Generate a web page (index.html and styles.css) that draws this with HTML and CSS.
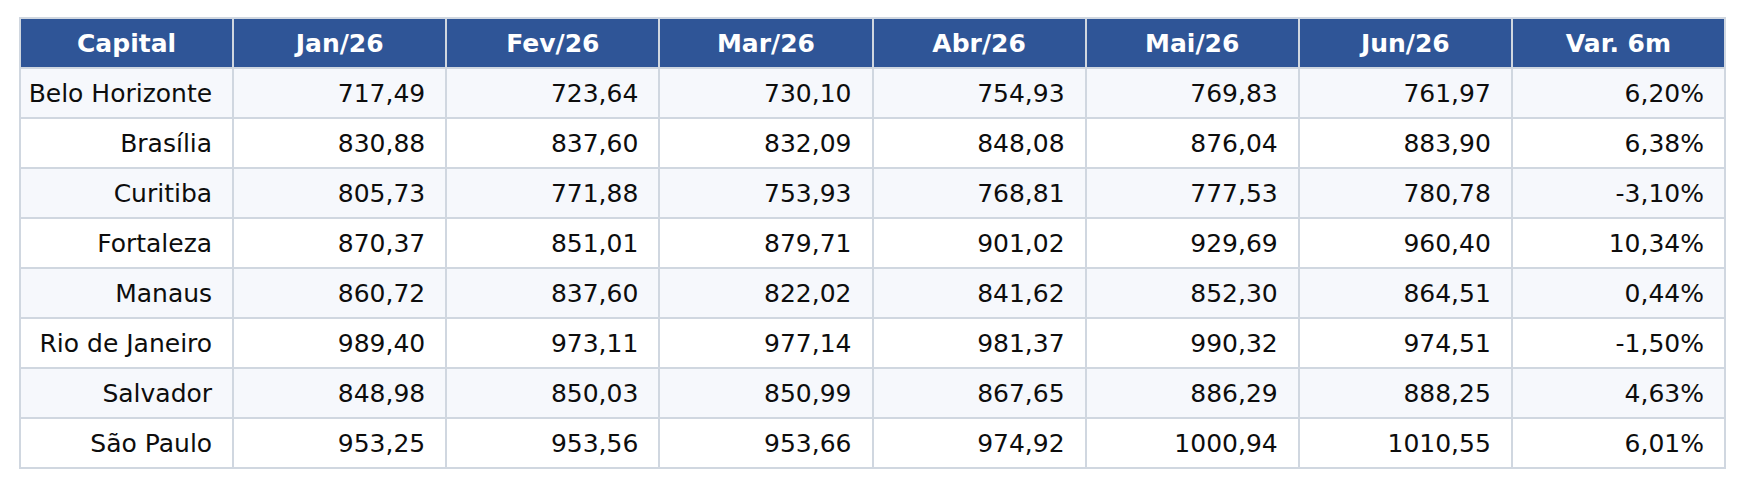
FILE: index.html
```html
<!DOCTYPE html>
<html lang="pt-BR">
<head>
<meta charset="utf-8">
<title>Capitais</title>
<link rel="stylesheet" href="styles.css">
</head>
<body>
<div class="wrap">
<table class="data">
<thead>
<tr><th>Capital</th><th>Jan/26</th><th>Fev/26</th><th>Mar/26</th><th>Abr/26</th><th>Mai/26</th><th>Jun/26</th><th>Var. 6m</th></tr>
</thead>
<tbody>
<tr><td>Belo Horizonte</td><td>717,49</td><td>723,64</td><td>730,10</td><td>754,93</td><td>769,83</td><td>761,97</td><td>6,20%</td></tr>
<tr><td>Brasília</td><td>830,88</td><td>837,60</td><td>832,09</td><td>848,08</td><td>876,04</td><td>883,90</td><td>6,38%</td></tr>
<tr><td>Curitiba</td><td>805,73</td><td>771,88</td><td>753,93</td><td>768,81</td><td>777,53</td><td>780,78</td><td>-3,10%</td></tr>
<tr><td>Fortaleza</td><td>870,37</td><td>851,01</td><td>879,71</td><td>901,02</td><td>929,69</td><td>960,40</td><td>10,34%</td></tr>
<tr><td>Manaus</td><td>860,72</td><td>837,60</td><td>822,02</td><td>841,62</td><td>852,30</td><td>864,51</td><td>0,44%</td></tr>
<tr><td>Rio de Janeiro</td><td>989,40</td><td>973,11</td><td>977,14</td><td>981,37</td><td>990,32</td><td>974,51</td><td>-1,50%</td></tr>
<tr><td>Salvador</td><td>848,98</td><td>850,03</td><td>850,99</td><td>867,65</td><td>886,29</td><td>888,25</td><td>4,63%</td></tr>
<tr><td>São Paulo</td><td>953,25</td><td>953,56</td><td>953,66</td><td>974,92</td><td>1000,94</td><td>1010,55</td><td>6,01%</td></tr>
</tbody>
</table>
</div>
</body>
</html>
```
FILE: styles.css
```css
html, body {
  margin: 0;
  padding: 0;
  background: #ffffff;
}
.wrap {
  padding: 17px 0 0 19px;
}
.data {
  width: 1707px;
  table-layout: fixed;
  border-collapse: separate;
  border-spacing: 0;
  border-top: 2px solid #d0d7e0;
  border-left: 2px solid #d0d7e0;
  font-family: "DejaVu Sans", Verdana, sans-serif;
  font-size: 25px;
}
.data th,
.data td {
  height: 50px;
  padding: 0 20px 0 0;
  border-right: 2px solid #d0d7e0;
  border-bottom: 2px solid #d0d7e0;
  white-space: nowrap;
  box-sizing: border-box;
  vertical-align: middle;
}
.data th {
  background: #2f5597;
  color: #ffffff;
  font-weight: bold;
  text-align: center;
  padding: 0;
}
.data td {
  text-align: right;
  color: #0d0d0d;
}
.data tbody tr:nth-child(odd) td {
  background: #f6f8fc;
}
.data tbody tr:nth-child(even) td {
  background: #ffffff;
}
```
